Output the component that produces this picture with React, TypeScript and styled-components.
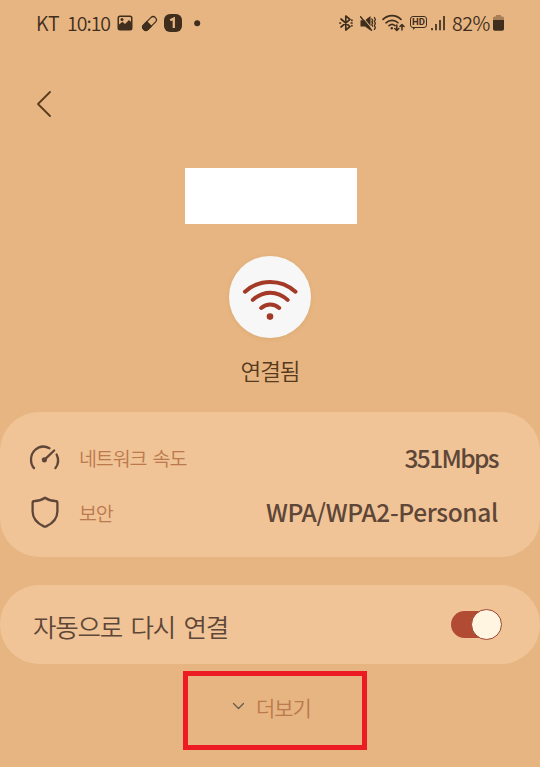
import React from 'react';
import styled, { createGlobalStyle } from 'styled-components';

const Global = createGlobalStyle`
  * { box-sizing: border-box; }
  body { margin: 0; background: #e7b581; font-family: "Noto Sans CJK KR", sans-serif; }
  svg { display: block; flex: none; }
`;

const Screen = styled.main`
  width: 540px;
  height: 767px;
  overflow: hidden;
  display: flex;
  flex-direction: column;
  align-items: center;
  background: #e7b581;
  color: #5e4638;
`;

const Label = styled.span<{ $size: number; $track?: number; $space?: number; $weight?: number; $color?: string; $drop?: number; $lift?: number }>`
  font-size: ${p => p.$size}px;
  letter-spacing: ${p => p.$track ?? 0}px;
  word-spacing: ${p => p.$space ?? 0}px;
  font-weight: ${p => p.$weight ?? 350};
  color: ${p => p.$color ?? 'inherit'};
  padding-top: ${p => p.$drop ?? 0}px;
  padding-bottom: ${p => p.$lift ?? 0}px;
  line-height: 30px;
  white-space: nowrap;
`;

const StatusBar = styled.header`
  width: 100%;
  height: 46px;
  padding: 0 36px;
  display: flex;
  align-items: center;
  justify-content: space-between;
  color: #3f2e1e;
`;

const StatusGroup = styled.div`
  display: flex;
  align-items: center;
`;

const Slot = styled.div<{ $w: number }>`
  width: ${p => p.$w}px;
  flex: none;
  display: flex;
  align-items: center;
`;

const NavBar = styled.nav`
  width: 100%;
  height: 122px;
  padding: 44px 0 0 36px;
`;

const BackButton = styled.button`
  border: 0;
  padding: 0;
  background: none;
  color: #593c1d;
`;

const NameBlock = styled.div`
  width: 172px;
  height: 56px;
  flex: none;
  margin-left: 2px;
  background: #fff;
`;

const Badge = styled.div`
  width: 82px;
  height: 82px;
  flex: none;
  margin-top: 32px;
  border-radius: 50%;
  background: #f7f7f7;
  box-shadow: 0 1px 4px rgba(150, 95, 40, 0.12);
`;

const State = styled.div`
  height: 74px;
  padding-top: 17px;
  color: #553a1e;
`;

const Card = styled.section<{ $h: number; $gap?: number }>`
  width: 100%;
  height: ${p => p.$h}px;
  flex: none;
  margin-bottom: ${p => p.$gap ?? 0}px;
  border-radius: 39px;
  background: #f0c496;
`;

const InfoCard = styled(Card)`
  padding: 20px 42px 18px 28px;
`;

const InfoRow = styled.div`
  height: 54px;
  display: grid;
  grid-template-columns: 51px 1fr auto;
  align-items: center;
`;

const ToggleCard = styled(Card)`
  display: flex;
  align-items: center;
  justify-content: space-between;
  padding: 0 43px 0 33px;
`;

const Switch = styled.button`
  width: 46px;
  height: 27px;
  padding: 0;
  border: 0;
  display: flex;
  align-items: center;
  justify-content: flex-end;
  background: #b14b34;
  border-radius: 14px;
`;

const Thumb = styled.span`
  width: 31px;
  height: 31px;
  flex: none;
  margin-right: -5px;
  border-radius: 50%;
  border: 1.5px solid #9c452f;
  background: #fff5e1;
`;

const MoreFrame = styled.div`
  width: 184px;
  height: 79px;
  flex: none;
  margin: 7px 0 0 10px;
  padding: 0 0 8px 44px;
  border: 5px solid #ed1c24;
  display: flex;
  align-items: center;
  gap: 11px;
`;

const line = { fill: 'none', stroke: 'currentColor', strokeLinecap: 'round', strokeLinejoin: 'round' } as const;

const PictureIcon = () => (
  <svg width="16" height="16" viewBox="0 0 16 16">
    <path fill="currentColor" fillRule="evenodd" d="M3 .5h10a2.5 2.5 0 0 1 2.5 2.5v10a2.5 2.5 0 0 1-2.5 2.5H3A2.5 2.5 0 0 1 .5 13V3A2.5 2.5 0 0 1 3 .5ZM2 9.5 5.5 6.7 8 9l4-4 2 2V3.2A1.2 1.2 0 0 0 12.8 2H3.2A1.2 1.2 0 0 0 2 3.2Z" />
    <circle cx="5" cy="4.6" r="1.5" fill="currentColor" />
  </svg>
);

const PillIcon = () => (
  <svg width="17" height="17" viewBox="0 0 17 17">
    <g transform="rotate(-45 8.5 8.5)">
      <rect x=".2" y="5.3" width="16.6" height="6.4" rx="3.2" {...line} strokeWidth="1.2" />
      <path d="M8.5 4.7H3.4a3.8 3.8 0 0 0 0 7.6h5.1Z" fill="currentColor" />
    </g>
  </svg>
);

const OneIcon = () => (
  <svg width="18" height="18" viewBox="0 0 18 18">
    <rect width="18" height="18" rx="6" fill="currentColor" />
    <path d="M6.2 6.3 9.8 4.6V14" fill="none" stroke="#e7b581" strokeWidth="2.3" />
  </svg>
);

const BluetoothIcon = () => (
  <svg width="15" height="18" viewBox="0 0 15 18">
    <path d="m2 5 9 7.6L6.8 16V2L11 5.4 2 13" {...line} strokeWidth="1.7" />
    <path d="M.9 9h.6M12.2 9h.8M12.9 6.2v.2M12.9 11.6v.2" {...line} strokeWidth="1.7" />
  </svg>
);

const MuteIcon = () => (
  <svg width="17" height="17" viewBox="0 0 17 17">
    <path d="M.5 5.2H5L10.5 1v14.5L5 11.6H.5Z" fill="currentColor" />
    <path d="m1.6 1 10 12" stroke="#e7b581" strokeWidth="1.1" />
    <path d="m.5 1.8 11 13.5" {...line} strokeWidth="1.4" />
    <path d="m11.8 4 .9 1.4-.9 1.4.9 1.4-.9 1.4.9 1.6M14.4 2.5l1 2-1 2 1 2-1 2 1 2-1 2" {...line} strokeWidth="1.3" />
  </svg>
);

const StatusWifiIcon = () => (
  <svg width="23" height="18" viewBox="0 0 23 18">
    <path d="M1 5.4c5-5.1 13.2-5.1 18 0M4 8.8c3.4-3.2 8.8-3.2 12 0M7 11.7c1.8-1.5 4.4-1.5 6 0" {...line} strokeWidth="1.6" />
    <circle cx="9.8" cy="14.2" r="1.2" fill="currentColor" />
    <path d="M14.8 11v5.5m-2-2 2 2 2-2M20 16v-5.5m-2 2 2-2 2 2" {...line} strokeWidth="1.5" />
  </svg>
);

const HdBubble = styled.span`
  width: 17px;
  height: 12px;
  margin-top: -2px;
  display: flex;
  align-items: center;
  justify-content: center;
  border: 1px solid currentColor;
  border-radius: 3px;
  font: 700 9.5px/10px Roboto, sans-serif;
  position: relative;
  &::after {
    content: '';
    position: absolute;
    left: 2px;
    top: 10px;
    width: 3px;
    height: 3px;
    background: currentColor;
    clip-path: polygon(0 0, 100% 0, 0 100%);
  }
`;

const SignalIcon = () => (
  <svg width="14" height="16" viewBox="0 0 14 16">
    <path d="M1 13v2.2M5 9v6.2M9 5v10.2M13 1v14.2" fill="none" stroke="currentColor" strokeWidth="1.7" />
  </svg>
);

const BatteryIcon = () => (
  <svg width="11" height="16" viewBox="0 0 11 16">
    <path d="M3 0h5v1.5h1.5A1.5 1.5 0 0 1 11 3v3H0V3a1.5 1.5 0 0 1 1.5-1.5H3Z" fill="#a77e55" />
    <path d="M0 5h11v9a1.8 1.8 0 0 1-1.8 1.8H1.8A1.8 1.8 0 0 1 0 14Z" fill="currentColor" />
  </svg>
);

const WifiIcon = () => (
  <svg width="82" height="82" viewBox="0 0 82 82" color="#a33a27">
    <path d="M16 35.7c14.5-13 36-13 50.5 0M23.8 43.9c10.4-9.7 24.5-9.7 34.8 0M32.2 51.9c5.4-4.6 12.8-4.6 18 0" {...line} strokeWidth="4" />
    <circle cx="41" cy="60.6" r="3.3" fill="currentColor" />
  </svg>
);

const SpeedIcon = () => (
  <svg width="34" height="34" viewBox="0 0 34 34">
    <path d="M6 26.1C1.6 21.3 2.2 12.5 7 8c4-3.7 9.6-4.4 14.5-1.8M28.6 12.5c2.2 4.5 1.6 10-1.2 13.6M16.6 17.7 26.2 8.5" {...line} strokeWidth="2.3" />
    <circle cx="16.4" cy="17.8" r="2.6" fill="currentColor" />
  </svg>
);

const ShieldIcon = () => (
  <svg width="34" height="34" viewBox="0 0 34 34">
    <path d="M17 1.8c2.9 2.1 6.3 3.1 10.3 3.2 1.4 0 2.1.8 2.1 2.1v8.2c0 6.7-4.1 11.8-11.2 15.1q-1.2.6-2.4 0C8.7 27.1 4.6 22 4.6 15.3V7.1C4.6 5.8 5.3 5 6.7 5 10.7 4.9 14.1 3.9 17 1.8Z" {...line} strokeWidth="2.3" />
  </svg>
);

export default function App() {
  return (
    <Screen>
      <Global />
      <StatusBar>
        <StatusGroup>
          <Slot $w={31}><Label $size={19.5} $track={0} $lift={1}>KT</Label></Slot>
          <Slot $w={50}><Label $size={19.5} $track={-1} $lift={1}>10:10</Label></Slot>
          <Slot $w={24}><PictureIcon /></Slot>
          <Slot $w={23}><PillIcon /></Slot>
          <Slot $w={30}><OneIcon /></Slot>
          <Slot $w={7}><svg width="7" height="7"><circle cx="3.2" cy="3.2" r="3" fill="currentColor" /></svg></Slot>
        </StatusGroup>
        <StatusGroup>
          <Slot $w={21}><BluetoothIcon /></Slot>
          <Slot $w={22}><MuteIcon /></Slot>
          <Slot $w={28}><StatusWifiIcon /></Slot>
          <Slot $w={21}><HdBubble>HD</HdBubble></Slot>
          <Slot $w={21}><SignalIcon /></Slot>
          <Slot $w={41}><Label $size={19.5} $track={-0.4} $lift={1}>82%</Label></Slot>
          <BatteryIcon />
        </StatusGroup>
      </StatusBar>
      <NavBar>
        <BackButton aria-label="뒤로">
          <svg width="16" height="28" viewBox="0 0 16 28"><path d="M14 2 2 14l12 12" {...line} strokeWidth="1.8" /></svg>
        </BackButton>
      </NavBar>
      <NameBlock />
      <Badge><WifiIcon /></Badge>
      <State><Label $size={22.5} $track={-1}>연결됨</Label></State>
      <InfoCard $h={145} $gap={28}>
        <InfoRow>
          <SpeedIcon />
          <Label $size={19.5} $track={-1.1} $space={3} $lift={2} $color="#bb794e">네트워크 속도</Label>
          <Label $size={24.5} $track={-1.6} $weight={500} $lift={2}>351Mbps</Label>
        </InfoRow>
        <InfoRow>
          <ShieldIcon />
          <Label $size={19.5} $track={-1.1} $lift={1} $color="#bb794e">보안</Label>
          <Label $size={24.5} $track={-0.35} $weight={500} $lift={2}>WPA/WPA2-Personal</Label>
        </InfoRow>
      </InfoCard>
      <ToggleCard $h={79}>
        <Label $size={25.5} $track={-1.2} $space={4} $drop={2}>자동으로 다시 연결</Label>
        <Switch role="switch" aria-checked="true"><Thumb /></Switch>
      </ToggleCard>
      <MoreFrame>
        <svg width="13" height="9" viewBox="0 0 13 9"><path d="m1.5 1.5 5 5 5-5" {...line} stroke="#655a4e" strokeWidth="1.3" /></svg>
        <Label $size={21} $track={-1.1} $color="#bb794e">더보기</Label>
      </MoreFrame>
    </Screen>
  );
}
